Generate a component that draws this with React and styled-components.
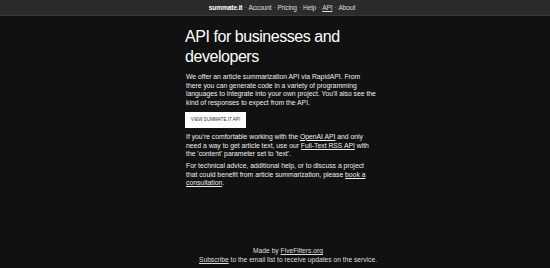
import React from "react";
import styled, { createGlobalStyle } from "styled-components";

const GlobalStyle = createGlobalStyle`
  html, body {
    margin: 0;
    padding: 0;
    background: #111111;
  }
  body {
    font-family: "Liberation Sans", Arial, sans-serif;
    color: #eeeeee;
  }
`;

const Page = styled.div`
  width: 550px;
  height: 268px;
  display: flex;
  flex-direction: column;
  background: #111111;
  overflow: hidden;
`;

const TopBar = styled.nav`
  height: 15px;
  padding-left: 14px;
  background: #2b2b2b;
  border-bottom: 1px solid #383838;
  display: flex;
  align-items: center;
  justify-content: center;
  font-size: 6.6px;
  letter-spacing: -0.12px;
  color: #dddddd;
`;

const Brand = styled.span`
  font-weight: bold;
  color: #ffffff;
`;

const NavLink = styled.span`
  text-decoration: ${(p) => (p.$active ? "underline" : "none")};
`;

const Sep = styled.span`
  margin: 0 2px;
  color: #999999;
`;

const Main = styled.main`
  width: 190.5px;
  margin-left: 186px;
  padding-top: 11px;
  flex: 1;
`;

const Title = styled.h1`
  margin: 0 0 6px -1px;
  font-size: 16px;
  line-height: 20px;
  font-weight: normal;
  letter-spacing: -0.45px;
  color: #ffffff;
`;

const Text = styled.p`
  margin: 0 0 ${(p) => p.$gap || 0}px;
  font-size: 6.8px;
  line-height: 8.7px;
  color: #eeeeee;
`;

const Link = styled.a`
  color: inherit;
  text-decoration: underline;
`;

const Button = styled.button`
  display: block;
  margin: 4px 0 5px -1px;
  padding: 0;
  width: 61px;
  height: 16px;
  background: #ffffff;
  color: #333333;
  border: none;
  font-family: inherit;
  font-size: 4.6px;
  text-transform: uppercase;
`;

const Footer = styled.footer`
  padding: 0 0 4px 26px;
  text-align: center;
  font-size: 6.7px;
  line-height: 9px;
  color: #dddddd;
`;

const navItems = ["Account", "Pricing", "Help", "API", "About"];

export default function App() {
  return (
    <Page>
      <GlobalStyle />
      <TopBar>
        <Brand>summate.it</Brand>
        {navItems.map((item) => (
          <React.Fragment key={item}>
            <Sep>·</Sep>
            <NavLink $active={item === "API"}>{item}</NavLink>
          </React.Fragment>
        ))}
      </TopBar>
      <Main>
        <Title>API for businesses and developers</Title>
        <Text>
          We offer an article summarization API via RapidAPI. From there you
          can generate code in a variety of programming languages to integrate
          into your own project. You'll also see the kind of responses to
          expect from the API.
        </Text>
        <Button>View summate.it API</Button>
        <Text $gap={3}>
          If you're comfortable working with the <Link>OpenAI API</Link> and
          only need a way to get article text, use our{" "}
          <Link>Full-Text RSS API</Link> with the 'content' parameter set to
          'text'.
        </Text>
        <Text>
          For technical advice, additional help, or to discuss a project that
          could benefit from article summarization, please{" "}
          <Link>book a consultation</Link>.
        </Text>
      </Main>
      <Footer>
        Made by <Link>FiveFilters.org</Link>
        <br />
        <Link>Subscribe</Link> to the email list to receive updates on the
        service.
      </Footer>
    </Page>
  );
}
